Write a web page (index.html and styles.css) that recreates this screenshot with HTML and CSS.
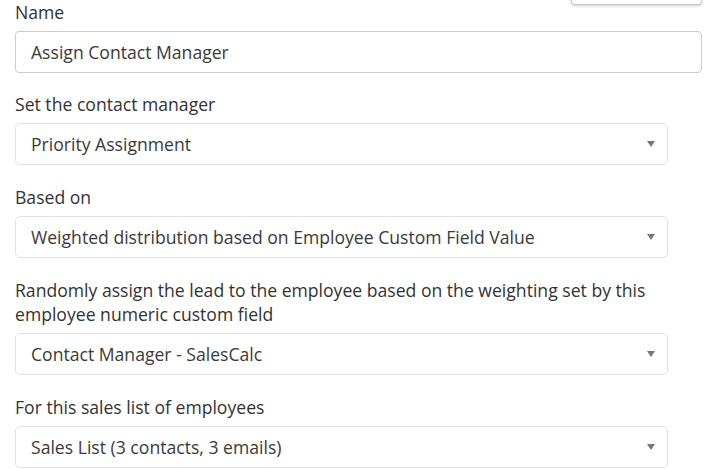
FILE: index.html
```html
<!DOCTYPE html>
<html lang="en">
<head>
    <meta charset="UTF-8">
    <meta name="viewport" content="width=device-width, initial-scale=1.0">
    <title>Assign Contact Manager</title>
    <link rel="stylesheet" href="styles.css">
</head>
<body>
    <div class="menu-tab"></div>
    <form class="step-form">
        <div class="form-group">
            <label class="field-label">Name</label>
            <input class="text-input" type="text" value="Assign Contact Manager">
        </div>

        <div class="form-group">
            <label class="field-label">Set the contact manager</label>
            <div class="select-box">
                <span class="select-value">Priority Assignment</span>
                <span class="caret"></span>
            </div>
        </div>

        <div class="form-group">
            <label class="field-label">Based on</label>
            <div class="select-box">
                <span class="select-value">Weighted distribution based on Employee Custom Field Value</span>
                <span class="caret"></span>
            </div>
        </div>

        <div class="form-group">
            <label class="field-label">Randomly assign the lead to the employee based on the weighting set by this employee numeric custom field</label>
            <div class="select-box">
                <span class="select-value">Contact Manager - SalesCalc</span>
                <span class="caret"></span>
            </div>
        </div>

        <div class="form-group">
            <label class="field-label">For this sales list of employees</label>
            <div class="select-box">
                <span class="select-value">Sales List (3 contacts, 3 emails)</span>
                <span class="caret"></span>
            </div>
        </div>
    </form>
</body>
</html>
```

FILE: styles.css
```css
body {
    font-family: "Open Sans", Arial, sans-serif;
    font-size: 17.6px;
    margin: 0;
    background-color: #fff;
    color: #333;
}
.menu-tab {
    position: absolute;
    top: -10px;
    left: 571px;
    width: 129px;
    height: 13px;
    background: #fff;
    border: 1px solid #c8c8c8;
    border-radius: 0 0 4px 4px;
    box-shadow: 0 1px 3px rgba(0, 0, 0, 0.2);
}
.step-form {
    padding: 0 13px 0 15px;
}
.form-group {
    display: flex;
    flex-direction: column;
    margin-bottom: 20px;
}
.form-group:first-child {
    margin-bottom: 19px;
}
.field-label {
    display: block;
    line-height: 24px;
    margin-bottom: 7px;
    padding-right: 40px;
}
.text-input {
    box-sizing: border-box;
    width: 687px;
    height: 42px;
    padding: 0 15px;
    border: 1px solid #ccc;
    border-radius: 4px;
    font: inherit;
    color: #3a3a3a;
    outline: none;
}
.select-box {
    box-sizing: border-box;
    display: flex;
    align-items: center;
    width: 653px;
    height: 42px;
    padding: 0 12px 0 15px;
    border: 1px solid #e2e2e2;
    border-radius: 5px;
    color: #3a3a3a;
}
.select-value {
    flex: 1;
    white-space: nowrap;
}
.caret {
    width: 0;
    height: 0;
    border-left: 4px solid transparent;
    border-right: 4px solid transparent;
    border-top: 6px solid #777;
}
```
